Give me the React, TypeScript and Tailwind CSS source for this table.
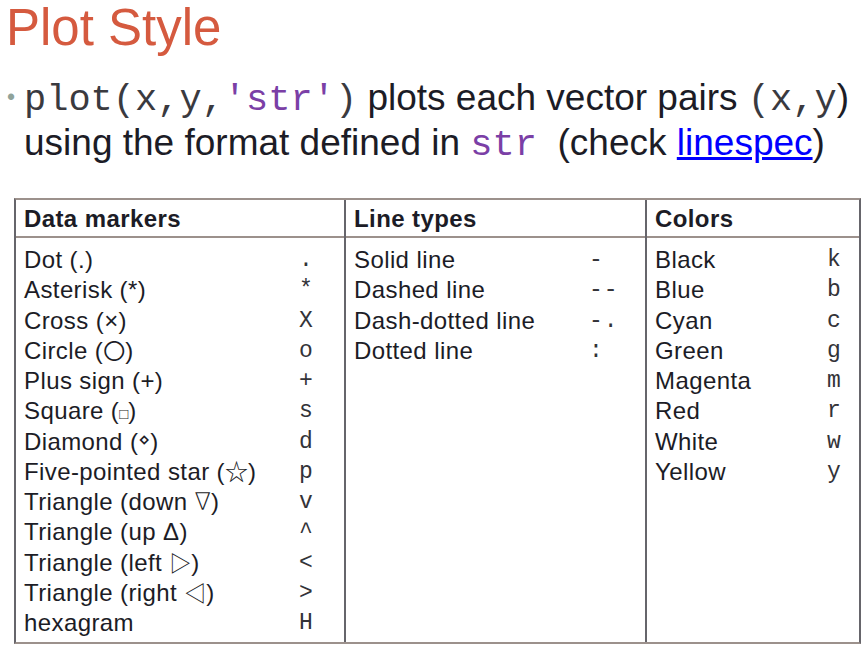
import React from "react";

const g = "leading-[0] tracking-normal";
const cjk = `font-['Noto_Sans_CJK_JP',sans-serif] ${g}`;
const dv = `font-['DejaVu_Sans',sans-serif] ${g}`;

const markers: [React.ReactNode, string][] = [
  ["Dot (.)", "."],
  ["Asterisk (*)", "*"],
  ["Cross (×)", "X"],
  [<>Circle (<span className={`${cjk} text-[22px]`}>〇</span>)</>, "o"],
  ["Plus sign (+)", "+"],
  [<>Square (<span className={`${g} text-[15px]`}>□</span>)</>, "s"],
  [<>Diamond (<span className={`${dv} align-[4px] text-[19px]`}>⋄</span>)</>, "d"],
  [<>Five-pointed star (<span className={`${cjk} text-[23px]`}>☆</span>)</>, "p"],
  [<>Triangle (down <span className={`${dv} font-light`}>∇</span>)</>, "v"],
  ["Triangle (up Δ)", "^"],
  [<>Triangle (left <span className={`${cjk} text-[22px]`}>▷</span>)</>, "<"],
  [<>Triangle (right <span className={`${cjk} text-[22px]`}>◁</span>)</>, ">"],
  ["hexagram", "H"],
];

const lines: [string, string][] = [
  ["Solid line", "-"],
  ["Dashed line", "--"],
  ["Dash-dotted line", "-."],
  ["Dotted line", ":"],
];

const colors: [string, string][] = [
  ["Black", "k"],
  ["Blue", "b"],
  ["Cyan", "c"],
  ["Green", "g"],
  ["Magenta", "m"],
  ["Red", "r"],
  ["White", "w"],
  ["Yellow", "y"],
];

const mono = "font-['Liberation_Mono','Courier_New',monospace]";

function Column({
  title,
  rows,
  symCol,
  className,
}: {
  title: string;
  rows: [React.ReactNode, string][];
  symCol: string;
  className: string;
}) {
  return (
    <div className={`flex flex-col ${className}`}>
      <div className="h-[38px] border-b-2 border-b-[#9c918c] pl-[8px] text-[24px] font-bold leading-[38px]">
        {title}
      </div>
      <div className={`grid ${symCol} auto-rows-[30.25px] pl-[8px] pt-[7px] pb-[4px] text-[24px] leading-[30.25px]`}>
        {rows.map(([label, sym], i) => (
          <React.Fragment key={i}>
            <div className="whitespace-nowrap">{label}</div>
            <div className={`${mono} whitespace-pre text-[23px] tracking-[1px] text-[#333338]`}>{sym}</div>
          </React.Fragment>
        ))}
      </div>
    </div>
  );
}

export default function App() {
  return (
    <div className="min-h-[646px] w-[866px] bg-white font-['Liberation_Sans',Arial,sans-serif] text-[#1c1c26]">
      <div className="pl-[6px] pt-[2px] text-[51px] leading-[51px] text-[#d55a3f]">Plot Style</div>

      <div className="mt-[22px] flex">
        <div className="w-[24px] pl-[7px] text-[23px] leading-[45px] text-[#8fa39a]">
          <span className="align-[3px]">•</span>
        </div>
        <div className="whitespace-nowrap text-[37px] leading-[45px]">
          <div>
            <span className={`${mono} leading-[20px] text-[#3a3a3f]`}>
              plot(x,y,<span className="text-[#7b3fa6]">'str'</span>)
            </span>{" "}
            plots each vector pairs{" "}
            <span className={`${mono} leading-[20px] text-[#3a3a3f]`}>(x,y</span>)
          </div>
          <div>
            using the format defined in{" "}
            <span className={`${mono} leading-[20px] text-[#7b3fa6]`}>str</span>
            <span className="whitespace-pre">{"  "}</span>(check{" "}
            <span className="text-[#0000ff] underline">linespec</span>)
          </div>
        </div>
      </div>

      <div className="ml-[14px] mt-[33px] flex w-[847px] border-x-2 border-y-2 border-x-[#66656b] border-y-[#9c918c] tracking-[0.4px]">
        <Column title="Data markers" rows={markers} symCol="grid-cols-[275px_auto]" className="w-[328px]" />
        <Column
          title="Line types"
          rows={lines}
          symCol="grid-cols-[235px_auto]"
          className="w-[301px] border-l-2 border-l-[#66656b]"
        />
        <Column
          title="Colors"
          rows={colors}
          symCol="grid-cols-[172px_auto]"
          className="w-[214px] border-l-2 border-l-[#66656b]"
        />
      </div>
    </div>
  );
}
